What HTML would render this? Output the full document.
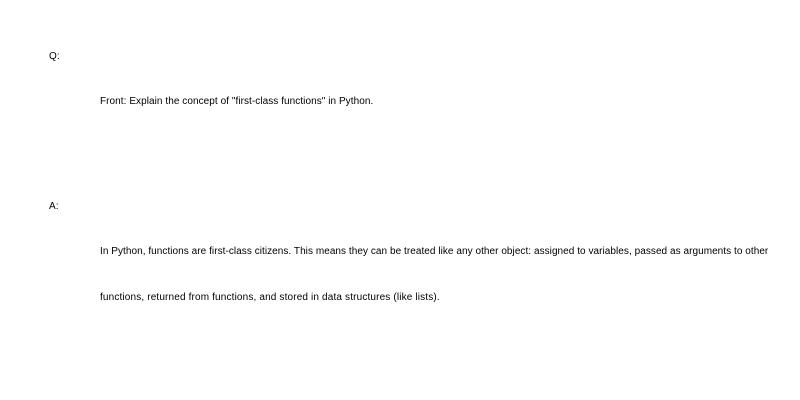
<!DOCTYPE html>
<html><head><style>
body{margin:0;width:800px;height:400px;background:#fff;font-family:"Liberation Sans",sans-serif;font-size:10px;color:#000;position:relative;overflow:hidden}
div{position:absolute;white-space:nowrap;line-height:12px;letter-spacing:0.06px}
</style></head><body>
<div style="left:49px;top:51px">Q:</div>
<div style="left:100px;top:96px">Front: Explain the concept of "first-class functions" in Python.</div>
<div style="left:49px;top:201px">A:</div>
<div style="left:100px;top:246px;letter-spacing:0.05px">In Python, functions are first-class citizens. This means they can be treated like any other object: assigned to variables, passed as arguments to other</div>
<div style="left:100px;top:292px;letter-spacing:0.15px">functions, returned from functions, and stored in data structures (like lists).</div>
</body></html>
